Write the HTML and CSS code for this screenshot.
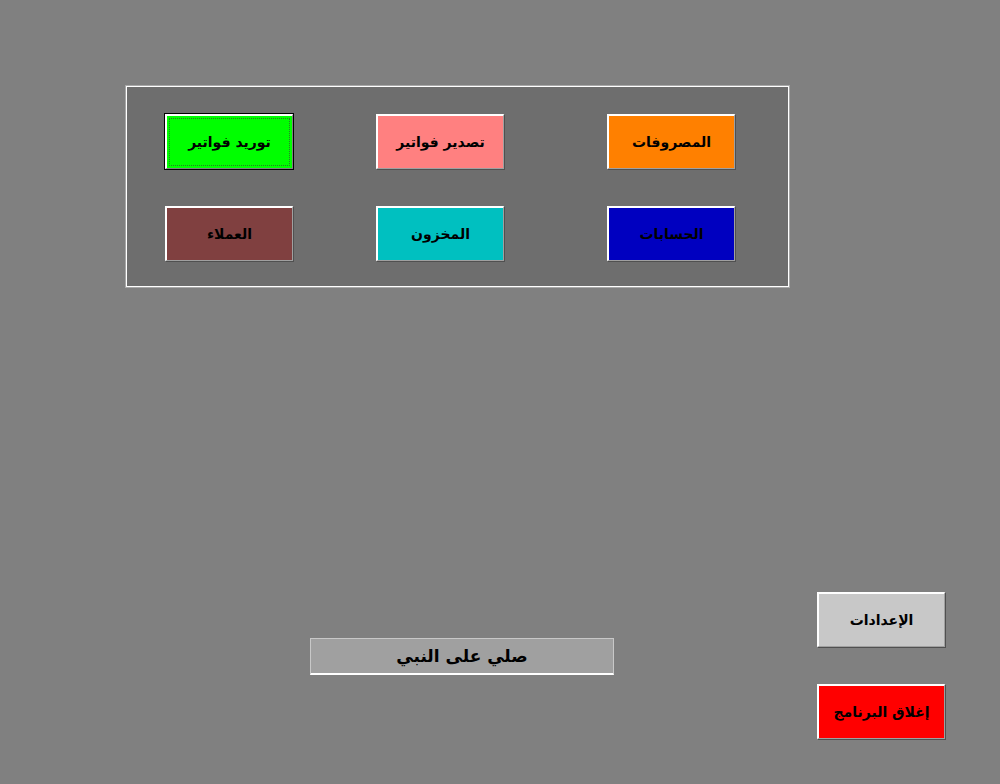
FILE: index.html
```html
<!DOCTYPE html>
<html lang="ar">
<head>
<meta charset="utf-8">
<title>القائمة الرئيسية</title>
<link rel="stylesheet" href="styles.css">
</head>
<body>
<div class="screen">
  <div class="frame">
    <div class="grid">
      <button class="btn btn-expenses">المصروفات</button>
      <button class="btn btn-export">تصدير فواتير</button>
      <button class="btn btn-import focused"><span class="focus">توريد فواتير</span></button>
      <button class="btn btn-accounts">الحسابات</button>
      <button class="btn btn-stock">المخزون</button>
      <button class="btn btn-clients">العملاء</button>
    </div>
  </div>
  <div class="bottom">
    <div class="label">صلي على النبي</div>
    <div class="side">
      <button class="btn btn-settings">الإعدادات</button>
      <button class="btn btn-close">إغلاق البرنامج</button>
    </div>
  </div>
</div>
</body>
</html>
```

FILE: styles.css
```css
html, body {
  margin: 0;
  padding: 0;
  background: #808080;
}
.screen {
  width: 1000px;
  height: 784px;
  overflow: hidden;
  font-family: "DejaVu Sans", "Liberation Sans", sans-serif;
}
.frame {
  margin: 85px 0 0 125px;
  width: 665px;
  height: 203px;
  box-sizing: border-box;
  background: #6e6e6e;
  border: 1px solid #a8a8a8;
  box-shadow: inset 1px 1px 0 #ffffff, inset -1px -1px 0 #ffffff;
  padding: 28px 0 0 39px;
}
.grid {
  direction: rtl;
  display: grid;
  grid-template-columns: 128px 231px 211px;
  grid-template-rows: 55px 55px;
  row-gap: 37px;
  justify-content: start;
  justify-items: end;
  width: 570px;
}
.btn {
  width: 128px;
  height: 55px;
  box-sizing: border-box;
  margin: 0;
  padding: 0;
  font-family: "DejaVu Sans", "Liberation Sans", sans-serif;
  font-weight: bold;
  font-size: 14px;
  color: #000;
  border-top: 2px solid #ffffff;
  border-left: 2px solid #ffffff;
  border-right: 1px solid #a0a0a0;
  border-bottom: 1px solid #a0a0a0;
  box-shadow: 1px 1px 0 #505050;
  display: flex;
  align-items: center;
  justify-content: center;
  direction: rtl;
}
.btn-expenses { background: #ff8000; }
.btn-export { background: #ff8080; }
.btn-import { background: #00ff00; }
.btn-accounts { background: #0000c0; }
.btn-stock { background: #00c0c0; }
.btn-clients { background: #804040; }
.btn-settings { background: #c8c8c8; }
.btn-close { background: #ff0000; }
.focused {
  outline: 1px solid #000;
  border-right: 1px solid #808080;
  border-bottom: 1px solid #808080;
  box-shadow: 1px 1px 0 #000;
  padding: 2px;
}
.focus {
  display: flex;
  align-items: center;
  justify-content: center;
  width: 100%;
  height: 100%;
  box-sizing: border-box;
  border: 1px dotted #2a7a2a;
}
.bottom {
  display: flex;
  margin-top: 304px;
  padding-left: 310px;
}
.label {
  margin-top: 46px;
  width: 304px;
  height: 37px;
  box-sizing: border-box;
  background: #a0a0a0;
  border: 1px solid #c8c8c8;
  border-bottom: 2px solid #ffffff;
  display: flex;
  align-items: center;
  justify-content: center;
  font-weight: bold;
  font-size: 17px;
  direction: rtl;
  color: #000;
}
.side {
  margin-left: 203px;
  display: flex;
  flex-direction: column;
  gap: 37px;
}
```
